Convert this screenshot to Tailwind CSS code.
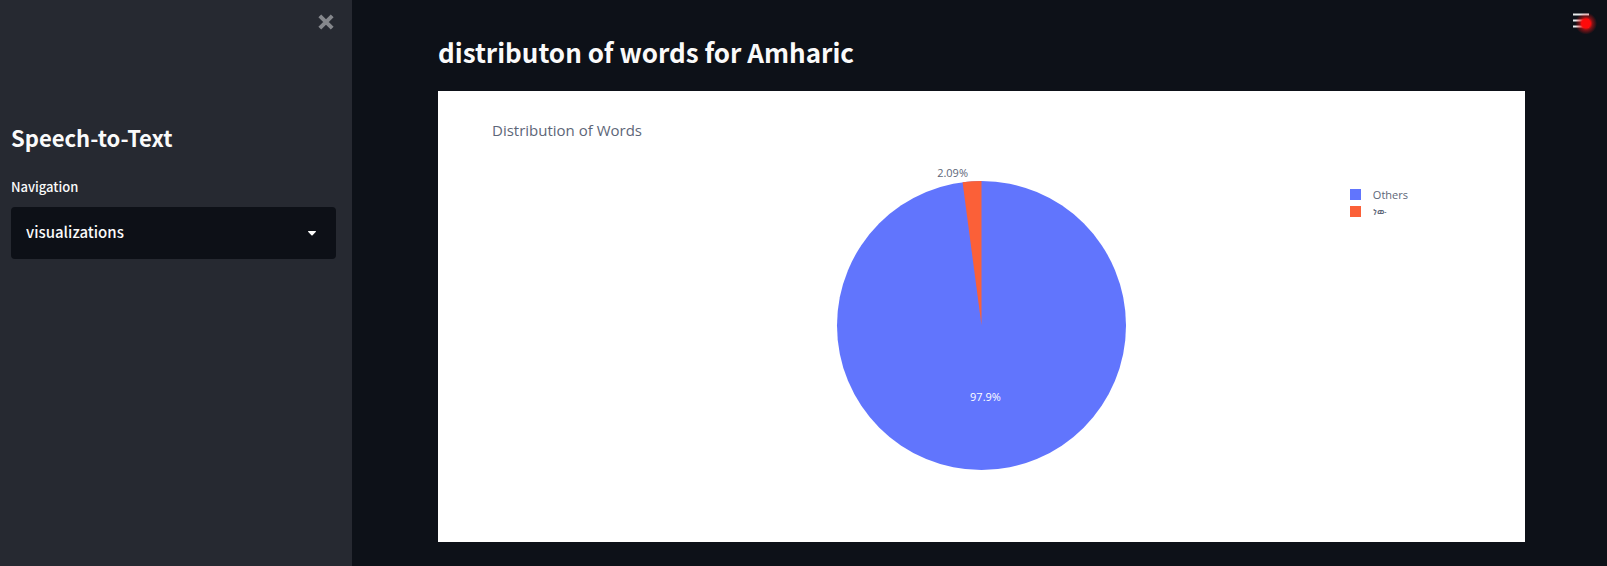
<!DOCTYPE html>
<html lang="en">
<head>
<meta charset="utf-8">
<meta name="viewport" content="width=device-width, initial-scale=1">
<title>Speech-to-Text</title>
<script src="https://cdn.jsdelivr.net/npm/@tailwindcss/browser@4"></script>
</head>
<body class="flex min-h-screen bg-[#0d1118] font-['Noto_Sans_CJK_SC','Noto_Sans',sans-serif] text-[#fafafa]">
  <aside class="relative w-[352px] shrink-0 bg-[#262931] pr-4 pl-[11px] pt-[121px]">
    <button type="button" aria-label="Close sidebar" class="absolute top-[14px] right-[18px] text-[#85878c]">
      <svg class="block size-4" viewBox="0 0 16 16" fill="none" stroke="currentColor" stroke-width="4"><path d="M1.8 1.8 14.2 14.2M14.2 1.8 1.8 14.2"/></svg>
    </button>
    <h1 class="text-[22px] leading-8 font-bold">Speech-to-Text</h1>
    <label for="nav" class="mt-[22px] block text-[13px] leading-6 font-medium">Navigation</label>
    <div class="relative mt-2">
      <select id="nav" class="block h-[52px] w-full appearance-none rounded bg-[#0d1017] px-[15px] pb-0.5 text-[15px] font-medium">
        <option>visualizations</option>
      </select>
      <svg class="pointer-events-none absolute top-6 right-5 h-[5px] w-2" viewBox="0 0 8 5" fill="currentColor"><path d="M.3 0h7.4q.5.5 0 1L4.6 4.2q-.6.6-1.2 0L.3 1q-.5-.5 0-1z"/></svg>
    </div>
  </aside>

  <main class="min-w-0 flex-1 pt-[30px] pr-[82px] pb-5 pl-[86px]">
    <h2 class="text-[26px] leading-[43px] font-bold">distributon of words for Amharic</h2>
    <figure class="mt-[18px] bg-white pb-[72px] font-['Open_Sans','Noto_Sans',sans-serif] text-[#2a3f5f]">
      <figcaption class="pt-[27px] pl-[54px] text-[15px] leading-6 text-[#5d6678]">Distribution of Words</figcaption>
      <div class="mt-[39px] grid grid-cols-[1fr_289px_1fr]">
        <svg class="col-start-2 block w-full overflow-visible text-[11px]" viewBox="0 0 290 290" role="img" aria-label="Others 97.9%, ነው 2.09%">
          <circle cx="145" cy="145" r="145" fill="#6175fd"/>
          <path d="M145 145V0A145 145 0 0 0 126 1.25Z" fill="#fb6038"/>
          <text x="116" y="-4" text-anchor="middle" fill="#5d6678">2.09%</text>
          <text x="149" y="221" text-anchor="middle" fill="#fff">97.9%</text>
        </svg>
        <ul class="mt-[5px] mr-[117px] justify-self-end text-[11px] leading-[17px] text-[#5d6678]">
          <li class="flex items-center gap-3"><span class="size-[11px] bg-[#6175fd]"></span>Others</li>
          <li class="flex items-center gap-3"><span class="size-[11px] bg-[#fb6038]"></span><span lang="am" class="text-[10px]">ነው</span></li>
        </ul>
      </div>
    </figure>
  </main>

  <button type="button" aria-label="Menu" class="absolute top-[13px] right-[18px]">
    <svg class="block h-4 w-4 overflow-visible" viewBox="0 0 16 16">
      <defs><radialGradient id="glow"><stop offset="0" stop-color="#ff0a0a"/><stop offset=".4" stop-color="#ff0a0a"/><stop offset=".6" stop-color="#f01414" stop-opacity=".5"/><stop offset="1" stop-color="#f01414" stop-opacity="0"/></radialGradient></defs>
      <path d="M0 1.5h16M0 7.5h16M0 13.5h16" stroke="#e8e9ea" stroke-width="2"/>
      <circle cx="13" cy="10.5" r="11" fill="url(#glow)"/>
    </svg>
  </button>
</body>
</html>
